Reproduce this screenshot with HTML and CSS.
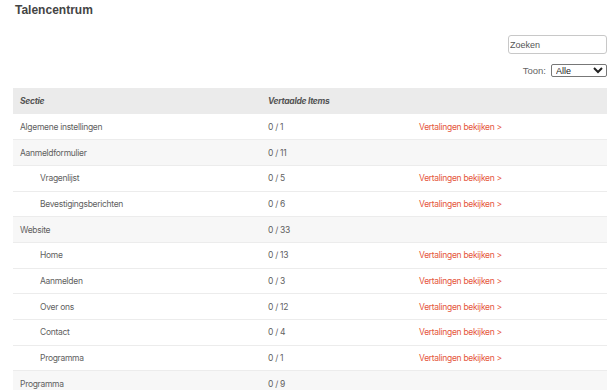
FILE: index.html
```html
<!DOCTYPE html>
<html lang="nl">
<head>
    <meta charset="UTF-8">
    <title>Talencentrum</title>
    <link rel="stylesheet" href="styles.css">
</head>
<body>
    <div class="page">
        <h1 class="title">Talencentrum</h1>

        <div class="tools">
            <input class="search" type="text" value="Zoeken">
            <label class="show">Toon:
                <select class="showSelect">
                    <option>Alle</option>
                </select>
            </label>
        </div>

        <table class="list">
            <thead>
                <tr>
                    <th>Sectie</th>
                    <th>Vertaalde Items</th>
                    <th></th>
                </tr>
            </thead>
            <tbody>
                <tr>
                    <td>Algemene instellingen</td>
                    <td>0 / 1</td>
                    <td><a href="#">Vertalingen bekijken &gt;</a></td>
                </tr>
                <tr class="group">
                    <td>Aanmeldformulier</td>
                    <td>0 / 11</td>
                    <td></td>
                </tr>
                <tr>
                    <td class="sub">Vragenlijst</td>
                    <td>0 / 5</td>
                    <td><a href="#">Vertalingen bekijken &gt;</a></td>
                </tr>
                <tr>
                    <td class="sub">Bevestigingsberichten</td>
                    <td>0 / 6</td>
                    <td><a href="#">Vertalingen bekijken &gt;</a></td>
                </tr>
                <tr class="group">
                    <td>Website</td>
                    <td>0 / 33</td>
                    <td></td>
                </tr>
                <tr>
                    <td class="sub">Home</td>
                    <td>0 / 13</td>
                    <td><a href="#">Vertalingen bekijken &gt;</a></td>
                </tr>
                <tr>
                    <td class="sub">Aanmelden</td>
                    <td>0 / 3</td>
                    <td><a href="#">Vertalingen bekijken &gt;</a></td>
                </tr>
                <tr>
                    <td class="sub">Over ons</td>
                    <td>0 / 12</td>
                    <td><a href="#">Vertalingen bekijken &gt;</a></td>
                </tr>
                <tr>
                    <td class="sub">Contact</td>
                    <td>0 / 4</td>
                    <td><a href="#">Vertalingen bekijken &gt;</a></td>
                </tr>
                <tr>
                    <td class="sub">Programma</td>
                    <td>0 / 1</td>
                    <td><a href="#">Vertalingen bekijken &gt;</a></td>
                </tr>
                <tr class="group">
                    <td>Programma</td>
                    <td>0 / 9</td>
                    <td></td>
                </tr>
            </tbody>
        </table>
    </div>
</body>
</html>
```

FILE: styles.css
```css
* {
    margin: 0;
    box-sizing: border-box;
}

body {
    font-family: Inter, "Noto Sans", sans-serif;
    color: #5f5f5f;
    background: #fff;
}

.page {
    padding: 3px 6px 0 13px;
}

.title {
    font-family: "Liberation Sans", Arial, sans-serif;
    font-size: 12px;
    font-weight: bold;
    color: #444;
    padding-left: 2px;
    height: 32px;
    line-height: 14px;
}

.tools {
    display: flex;
    flex-direction: column;
    align-items: flex-end;
    gap: 10px;
    height: 53px;
}

.search {
    width: 99px;
    height: 19px;
    border: 1px solid #c8c8c8;
    border-radius: 3px;
    padding: 0 1px;
    font-family: "Liberation Sans", Arial, sans-serif;
    font-size: 9px;
    color: #555;
}

.show {
    font-family: "Liberation Sans", Arial, sans-serif;
    font-size: 9.5px;
    color: #666;
    display: flex;
    align-items: center;
    gap: 5px;
}

.showSelect {
    width: 56px;
    height: 13px;
    font-family: "Liberation Sans", Arial, sans-serif;
    font-size: 9px;
    color: #222;
    border: 1px solid #777;
    border-radius: 2px;
    padding: 0;
    background: #fff;
}

.list {
    width: 100%;
    border-collapse: collapse;
    font-size: 8.5px;
    letter-spacing: -0.3px;
}

.list th {
    background: #ebebeb;
    height: 26px;
    text-align: left;
    font-style: italic;
    font-weight: bold;
    color: #555;
    padding: 0 7px;
}

.list td {
    height: 25.7px;
    padding: 0 7px;
    border-bottom: 1px solid #ececec;
}

.list th:nth-child(1),
.list td:nth-child(1) {
    width: 248px;
}

.list th:nth-child(2),
.list td:nth-child(2) {
    width: 151px;
}

.list .group td {
    background: #f7f7f7;
}

.list td.sub {
    padding-left: 27px;
}

.list a {
    color: #e5553b;
    text-decoration: none;
}
```
